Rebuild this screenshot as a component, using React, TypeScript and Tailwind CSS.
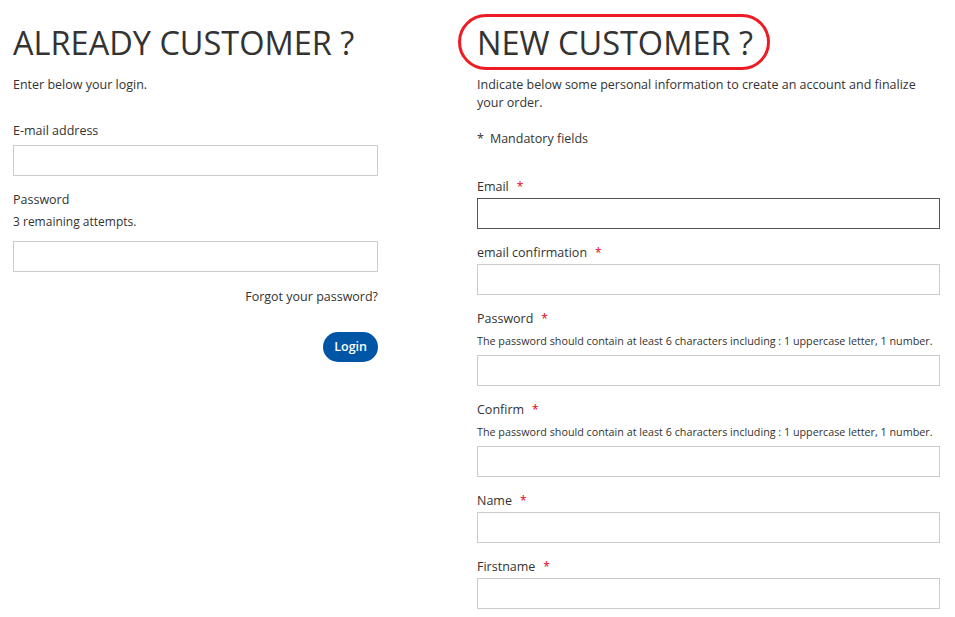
const font = { fontFamily: '"Open Sans", "Liberation Sans", sans-serif' };

function Required() {
  return <span className="ml-[8px] text-[12px] text-[#e3000f]">*</span>;
}

function Field({
  label,
  hint,
  focused,
  first,
}: {
  label: string;
  hint?: string;
  focused?: boolean;
  first?: boolean;
}) {
  return (
    <div className={first ? 'mt-[30px]' : 'mt-[15px]'}>
      <div className="h-[18px] leading-[18px] text-[12.5px]">
        {label}
        <Required />
      </div>
      {hint && (
        <div className="mt-[5px] h-[16px] leading-[16px] text-[10.75px] whitespace-nowrap">
          {hint}
        </div>
      )}
      <input
        type="text"
        className={`block w-full h-[31px] bg-white outline-none ${
          hint ? 'mt-[6px]' : 'mt-[2px]'
        } ${focused ? 'border border-[#555]' : 'border border-[#ccc]'}`}
      />
    </div>
  );
}

export default function App() {
  const hint =
    'The password should contain at least 6 characters including : 1 uppercase letter, 1 number.';
  return (
    <div className="min-h-screen bg-white text-[#333] px-[13px] flex" style={font}>
      {/* left: login */}
      <div className="w-[365px] shrink-0">
        <h1 className="mt-[23px] text-[32.5px] leading-[40px] font-normal text-[#333] whitespace-nowrap">
          ALREADY CUSTOMER ?
        </h1>
        <p className="mt-[13px] text-[12.5px] leading-[18px]">Enter below your login.</p>

        <div className="mt-[28px] text-[12.5px] leading-[18px]">E-mail address</div>
        <input
          type="text"
          className="block mt-[5px] w-full h-[31px] border border-[#ccc] outline-none"
        />

        <div className="mt-[15px] text-[12.5px] leading-[18px]">Password</div>
        <div className="mt-[4px] text-[12px] leading-[18px]">3 remaining attempts.</div>
        <input
          type="password"
          className="block mt-[10px] w-full h-[31px] border border-[#ccc] outline-none"
        />

        <div className="mt-[16px] text-right text-[12.5px] leading-[18px]">
          Forgot your password?
        </div>
        <div className="mt-[26px] flex justify-end">
          <button className="h-[30px] px-[11px] rounded-full bg-[#0155a5] text-white text-[12.5px] font-semibold">
            Login
          </button>
        </div>
      </div>

      {/* right: new account */}
      <div className="ml-[99px] w-[463px] shrink-0">
        <div className="relative mt-[23px]">
          <h1 className="text-[32.5px] leading-[40px] font-normal text-[#333] whitespace-nowrap">
            NEW CUSTOMER ?
          </h1>
          <div className="absolute left-[-19px] top-[-9px] w-[312px] h-[56px] border-[3px] border-[#ed1c24] rounded-[28px]" />
        </div>
        <p className="mt-[13px] pr-[16px] text-[12.5px] leading-[18px]">
          Indicate below some personal information to create an account and finalize your
          order.
        </p>
        <p className="mt-[18px] text-[12.5px] leading-[18px]">
          <span className="mr-[6px]">*</span>Mandatory fields
        </p>

        <Field label="Email" focused first />
        <Field label="email confirmation" />
        <Field label="Password" hint={hint} />
        <Field label="Confirm" hint={hint} />
        <Field label="Name" />
        <Field label="Firstname" />
      </div>
    </div>
  );
}
